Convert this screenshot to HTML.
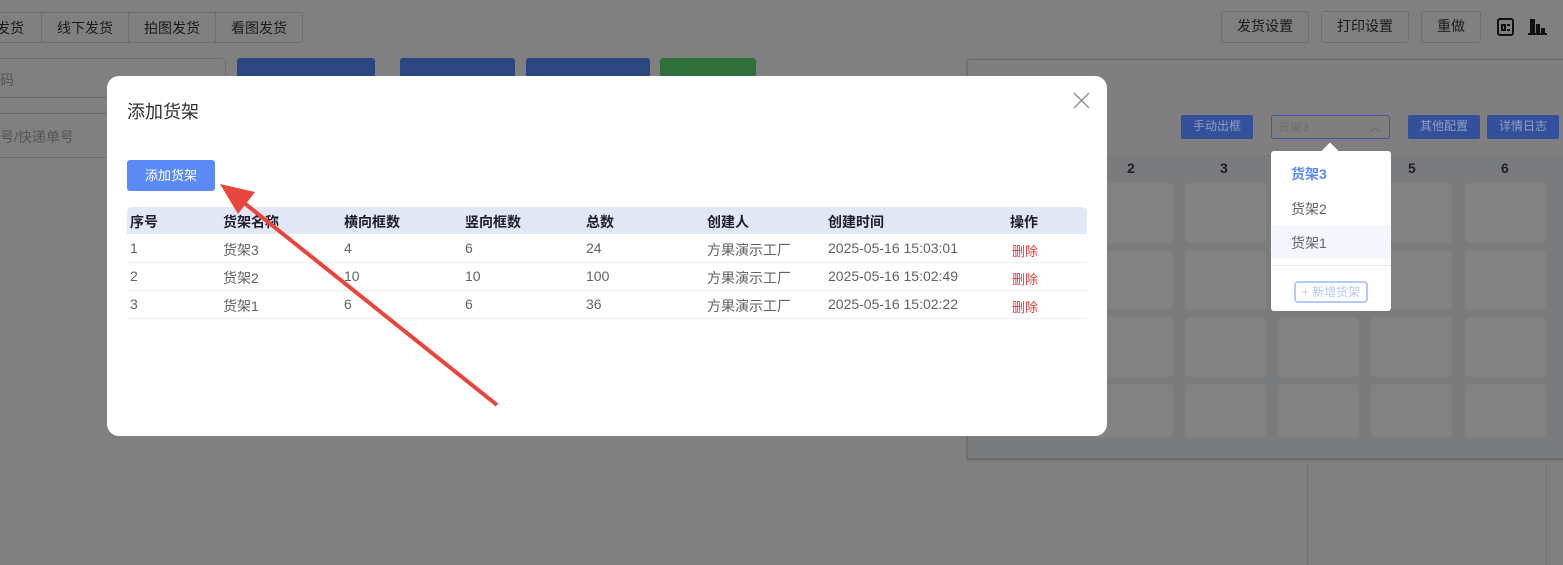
<!DOCTYPE html>
<html style="background:#808080"><head><meta charset="utf-8"><style>
*{box-sizing:border-box;margin:0;padding:0}
html,body{width:1563px;height:565px;overflow:hidden;background:#808080}
body{font-family:"Liberation Sans","Noto Sans CJK SC",sans-serif;position:relative;font-size:14px}
.a{position:absolute}
.tb{border:1px solid #6e6e6e;border-radius:3px;color:#1a1a1a;font-size:14px;text-align:center;line-height:28px}
.bb{background:#2c4680;border-radius:3px}
.ib{background:#34509a;color:#8f9fc6;font-size:12px;text-align:center;line-height:23px;border-radius:2px}
.cell{background:#828282;border-radius:4px;width:81px;height:60px}
.modal{left:107px;top:76px;width:1000px;height:360px;background:#fff;border-radius:12px}
.th{font-weight:bold;color:#1d1d2b;font-size:14px}
.td{color:#606266;font-size:14px}
.del{color:#e4393c;font-size:13px}
</style></head><body>
<div class="a" style="left:0;top:0;width:1563px;height:565px;background:#808080"></div>
<!-- top tabs -->
<div class="a" style="left:-10px;top:12px;width:313px;height:31px;border:1px solid #6e6e6e;border-radius:3px"></div>
<div class="a" style="left:41px;top:12px;width:1px;height:31px;background:#6e6e6e"></div>
<div class="a" style="left:128px;top:12px;width:1px;height:31px;background:#6e6e6e"></div>
<div class="a" style="left:215px;top:12px;width:1px;height:31px;background:#6e6e6e"></div>
<div class="a" style="left:-4px;top:18px;color:#1a1a1a">发货</div>
<div class="a" style="left:57px;top:18px;color:#1a1a1a">线下发货</div>
<div class="a" style="left:144px;top:18px;color:#1a1a1a">拍图发货</div>
<div class="a" style="left:231px;top:18px;color:#1a1a1a">看图发货</div>
<div class="a tb" style="left:1221px;top:11px;width:88px;height:32px">发货设置</div>
<div class="a tb" style="left:1321px;top:11px;width:88px;height:32px">打印设置</div>
<div class="a tb" style="left:1421px;top:11px;width:60px;height:32px">重做</div>
<div class="a" style="left:1497px;top:18px;width:17px;height:18px;border:2px solid #111;border-radius:3px"></div>
<div class="a" style="left:1501px;top:24px;width:5px;height:7px;border:2px solid #111"></div>
<div class="a" style="left:1507px;top:24px;width:3px;height:2px;background:#111"></div>
<div class="a" style="left:1507px;top:29px;width:3px;height:2px;background:#111"></div>
<div class="a" style="left:1530px;top:19px;width:5px;height:15px;background:#111"></div>
<div class="a" style="left:1536px;top:24px;width:4px;height:10px;background:#111"></div>
<div class="a" style="left:1541px;top:28px;width:4px;height:6px;background:#111"></div>
<div class="a" style="left:1528px;top:33px;width:19px;height:2px;background:#111"></div>
<!-- inputs -->
<div class="a" style="left:-5px;top:58px;width:231px;height:40px;border:1px solid #6e6e6e;border-radius:3px"></div>
<div class="a" style="left:0;top:70px;color:#555">码</div>
<div class="a" style="left:0;top:113px;width:110px;height:45px;border-top:1px solid #6e6e6e;border-bottom:1px solid #6e6e6e"></div>
<div class="a" style="left:0;top:127px;color:#555">号/快递单号</div>
<div class="a bb" style="left:237px;top:58px;width:138px;height:30px"></div>
<div class="a bb" style="left:400px;top:58px;width:115px;height:30px"></div>
<div class="a bb" style="left:526px;top:58px;width:124px;height:30px"></div>
<div class="a" style="left:660px;top:58px;width:96px;height:30px;background:#2f6f3c;border-radius:3px"></div>
<!-- right panel -->
<div class="a" style="left:967px;top:59px;width:600px;height:400px;background:#7a7b7d;border:1px solid #6a6a6a;box-shadow:0 1px 2px #666"></div>
<div class="a" style="left:968px;top:60px;width:600px;height:95px;background:#7f7f7f"></div>
<div class="a" style="left:1307px;top:459px;width:1px;height:106px;background:#747474"></div>
<div class="a" style="left:1546px;top:459px;width:1px;height:106px;background:#747474"></div>
<div class="a ib" style="left:1181px;top:115px;width:72px;height:24px">手动出框</div>
<div class="a" style="left:1271px;top:115px;width:119px;height:24px;border:1px solid #3a58a8;border-radius:3px;color:#6d6d6d;font-size:12px;line-height:22px;padding-left:6px">货架3<span style="position:absolute;right:8px;top:0;color:#666">︿</span></div>
<div class="a ib" style="left:1408px;top:115px;width:72px;height:24px">其他配置</div>
<div class="a ib" style="left:1487px;top:115px;width:72px;height:24px">详情日志</div>
<div class="a th" style="left:1127px;top:160px;color:#1d1d2b">2</div>
<div class="a th" style="left:1220px;top:160px;color:#1d1d2b">3</div>
<div class="a th" style="left:1408px;top:160px;color:#1d1d2b">5</div>
<div class="a th" style="left:1501px;top:160px;color:#1d1d2b">6</div>
<div class="a cell" style="left:1092px;top:183px"></div><div class="a cell" style="left:1185px;top:183px"></div><div class="a cell" style="left:1278px;top:183px"></div><div class="a cell" style="left:1371px;top:183px"></div><div class="a cell" style="left:1465px;top:183px"></div>
<div class="a cell" style="left:1092px;top:250px"></div><div class="a cell" style="left:1185px;top:250px"></div><div class="a cell" style="left:1278px;top:250px"></div><div class="a cell" style="left:1371px;top:250px"></div><div class="a cell" style="left:1465px;top:250px"></div>
<div class="a cell" style="left:1092px;top:317px"></div><div class="a cell" style="left:1185px;top:317px"></div><div class="a cell" style="left:1278px;top:317px"></div><div class="a cell" style="left:1371px;top:317px"></div><div class="a cell" style="left:1465px;top:317px"></div>
<div class="a cell" style="left:1092px;top:384px;height:54px"></div><div class="a cell" style="left:1185px;top:384px;height:54px"></div><div class="a cell" style="left:1278px;top:384px;height:54px"></div><div class="a cell" style="left:1371px;top:384px;height:54px"></div><div class="a cell" style="left:1465px;top:384px;height:54px"></div>
<!-- dropdown -->
<div class="a" style="left:1324px;top:145px;width:12px;height:12px;background:#fff;transform:rotate(45deg)"></div>
<div class="a" style="left:1271px;top:151px;width:120px;height:160px;background:#fff;border-radius:3px"></div>
<div class="a" style="left:1291px;top:164px;color:#5b8af7;font-weight:bold">货架3</div>
<div class="a" style="left:1291px;top:199px;color:#606266">货架2</div>
<div class="a" style="left:1271px;top:225px;width:120px;height:34px;background:#f5f7fe"></div>
<div class="a" style="left:1291px;top:233px;color:#606266">货架1</div>
<div class="a" style="left:1271px;top:265px;width:120px;height:1px;background:#e8e8ee"></div>
<div class="a" style="left:1294px;top:281px;width:74px;height:22px;border:2px solid #b3c8fb;border-radius:4px;color:#b3c8fb;font-size:12px;line-height:18px;text-align:center">+ 新增货架</div>
<!-- modal -->
<div class="a modal"></div>
<div class="a" style="left:127px;top:98px;font-size:18px;color:#303133">添加货架</div>
<svg class="a" style="left:1073px;top:92px" width="17" height="17"><path d="M1 1L16 16M16 1L1 16" stroke="#909399" stroke-width="1.5"/></svg>
<div class="a" style="left:127px;top:160px;width:88px;height:31px;background:#5b8af7;border-radius:3px;color:#fff;font-size:13px;line-height:31px;text-align:center">添加货架</div>
<div class="a" style="left:127px;top:207px;width:960px;height:27px;background:#e2e7f5;border-radius:5px 5px 0 0"></div>
<div class="a" style="left:127px;top:262px;width:960px;height:1px;background:#ebeef5"></div>
<div class="a" style="left:127px;top:290px;width:960px;height:1px;background:#ebeef5"></div>
<div class="a" style="left:127px;top:318px;width:960px;height:1px;background:#ebeef5"></div>
<div class="a th" style="left:130px;top:212px">序号</div><div class="a th" style="left:223px;top:212px">货架名称</div><div class="a th" style="left:344px;top:212px">横向框数</div><div class="a th" style="left:465px;top:212px">竖向框数</div><div class="a th" style="left:586px;top:212px">总数</div><div class="a th" style="left:707px;top:212px">创建人</div><div class="a th" style="left:828px;top:212px">创建时间</div><div class="a th" style="left:1010px;top:212px">操作</div>
<div class="a td" style="left:130px;top:240px">1</div><div class="a td" style="left:223px;top:240px">货架3</div><div class="a td" style="left:344px;top:240px">4</div><div class="a td" style="left:465px;top:240px">6</div><div class="a td" style="left:586px;top:240px">24</div><div class="a td" style="left:707px;top:240px">方果演示工厂</div><div class="a td" style="left:828px;top:240px">2025-05-16 15:03:01</div><div class="a del" style="left:1012px;top:241px">删除</div>
<div class="a td" style="left:130px;top:268px">2</div><div class="a td" style="left:223px;top:268px">货架2</div><div class="a td" style="left:344px;top:268px">10</div><div class="a td" style="left:465px;top:268px">10</div><div class="a td" style="left:586px;top:268px">100</div><div class="a td" style="left:707px;top:268px">方果演示工厂</div><div class="a td" style="left:828px;top:268px">2025-05-16 15:02:49</div><div class="a del" style="left:1012px;top:269px">删除</div>
<div class="a td" style="left:130px;top:296px">3</div><div class="a td" style="left:223px;top:296px">货架1</div><div class="a td" style="left:344px;top:296px">6</div><div class="a td" style="left:465px;top:296px">6</div><div class="a td" style="left:586px;top:296px">36</div><div class="a td" style="left:707px;top:296px">方果演示工厂</div><div class="a td" style="left:828px;top:296px">2025-05-16 15:02:22</div><div class="a del" style="left:1012px;top:297px">删除</div>
<!-- arrow -->
<svg class="a" style="left:0;top:0" width="1563" height="565"><path d="M497 405L238 198" stroke="#e8453c" stroke-width="4"/><path d="M220 184L255 192L238 214Z" fill="#e8453c"/></svg>
</body></html>
